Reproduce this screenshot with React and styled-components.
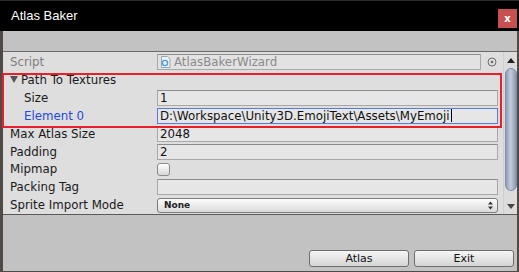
import React from "react";
import styled, { createGlobalStyle } from "styled-components";

const Global = createGlobalStyle`
  html, body { margin: 0; padding: 0; background: #4b4642; }
  * { box-sizing: border-box; }
`;

const Window = styled.div`
  width: 519px;
  height: 272px;
  display: flex;
  flex-direction: column;
  background: #4f4a45;
  font-family: "DejaVu Sans", sans-serif;
  font-size: 11.8px;
  color: #1a1a1a;
`;

const TitleBar = styled.div`
  height: 31px;
  flex: none;
  background: #000;
  border-top: 1px solid #2b2b2b;
  display: flex;
  align-items: center;
  justify-content: space-between;
  padding: 0 2px 0 11px;
`;

const Title = styled.span`
  font-family: "Liberation Sans", Arial, sans-serif;
  font-size: 13px;
  color: #fff;
  margin-top: -2px;
`;

const Close = styled.div`
  width: 19px;
  height: 19px;
  background: #c75050;
  color: #fff;
  font-family: "DejaVu Sans", sans-serif;
  font-weight: bold;
  font-size: 10px;
  display: flex;
  align-items: center;
  justify-content: center;
  margin-top: 4px;
`;

const Client = styled.div`
  flex: 1;
  margin: 0 2px 1px 3px;
  background: #c2c2c2;
  display: flex;
  flex-direction: column;
  padding-top: 20px;
`;

const Inspector = styled.div`
  height: 164px;
  display: flex;
  border-top: 1px solid #6a6a6a;
  border-bottom: 1px solid #5a5a5a;
  background: #dedede;
`;

const Rows = styled.div`
  flex: 1;
  display: flex;
  flex-direction: column;
  padding-top: 1px;
`;

const Group = styled.div`
  position: relative;
  &::after {
    content: "";
    position: absolute;
    top: 2px;
    bottom: -3px;
    left: -1px;
    right: 1px;
    border: 2px solid #e8202a;
    pointer-events: none;
  }
`;

const Row = styled.div`
  height: 18px;
  display: flex;
  align-items: center;
  padding: 0 5px 0 7px;
`;

const Label = styled.div`
  width: 147px;
  flex: none;
  padding-left: ${(p) => (p.$indent ? 14 : 0)}px;
  color: ${(p) => p.$color || "#1a1a1a"};
  display: flex;
  align-items: center;
  white-space: nowrap;
`;

const Fold = styled.span`
  width: 0;
  height: 0;
  border-left: 4px solid transparent;
  border-right: 4px solid transparent;
  border-top: 7px solid #555;
  margin-right: 3px;
`;

const Field = styled.div`
  flex: 1;
  height: 16px;
  background: ${(p) => (p.$disabled ? "#e2e2e2" : "#e6e6e6")};
  border: 1px solid ${(p) => (p.$focus ? "#5a78e0" : "#a8a8a8")};
  border-top-color: ${(p) => (p.$focus ? "#5a78e0" : "#8c8c8c")};
  color: ${(p) => (p.$disabled ? "#8a8a8a" : "#111")};
  padding-left: 2px;
  display: flex;
  align-items: center;
  white-space: nowrap;
  overflow: hidden;
`;

const Caret = styled.span`
  display: inline-block;
  width: 1px;
  height: 13px;
  background: #000;
  margin-left: 1px;
`;

const Picker = styled.div`
  width: 22px;
  flex: none;
  display: flex;
  justify-content: center;
  margin-right: -5px;
`;

const Check = styled.div`
  width: 13px;
  height: 13px;
  border: 1px solid #8a8a8a;
  border-radius: 3px;
  background: linear-gradient(#ffffff, #d6d6d6);
`;

const Popup = styled.div`
  flex: 1;
  height: 15px;
  border: 1px solid #7c7c7c;
  border-radius: 3px;
  background: linear-gradient(#fdfdfd, #dadada);
  display: flex;
  align-items: center;
  justify-content: space-between;
  padding: 0 4px 0 6px;
  font-size: 9px;
  font-weight: 600;
  color: #222;
`;

const Scrollbar = styled.div`
  width: 14px;
  flex: none;
  display: flex;
  flex-direction: column;
  align-items: center;
  background: #dcdcdc;
  border-left: 1px solid #cfcfcf;
`;

const Arrow = styled.div`
  height: 16px;
  display: flex;
  align-items: center;
  justify-content: center;
`;

const Thumb = styled.div`
  flex: 1;
  width: 12px;
  margin: 0 0 7px;
  border-radius: 6px;
  border: 1px solid #7f8ea8;
  background: linear-gradient(90deg, #8f9db5, #c3cbdb 45%, #aab5c8 70%, #8594ad);
`;

const Footer = styled.div`
  flex: 1;
  display: flex;
  justify-content: flex-end;
  align-items: flex-end;
  gap: 5px;
  padding: 0 3px 4px 0;
`;

const Button = styled.div`
  width: 100px;
  height: 17px;
  border: 1px solid #6e6e6e;
  border-radius: 3px;
  background: linear-gradient(#f6f6f6, #d4d4d4);
  display: flex;
  align-items: center;
  justify-content: center;
  font-size: 11px;
  color: #111;
`;

const ScriptIcon = () => (
  <svg width="11" height="12" viewBox="0 0 11 12" style={{ marginRight: 3 }}>
    <path d="M1.5 0.5h6l2.5 2.5v8.5h-8.5z" fill="#eef2f6" stroke="#9aa6b2" />
    <circle cx="5" cy="7" r="2.6" fill="none" stroke="#4aa0d8" strokeWidth="1.4" />
  </svg>
);

export default function App() {
  return (
    <>
      <Global />
      <Window>
        <TitleBar>
          <Title>Atlas Baker</Title>
          <Close>x</Close>
        </TitleBar>
        <Client>
          <Inspector>
            <Rows>
              <Row>
                <Label $color="#7e7e7e">Script</Label>
                <Field $disabled>
                  <ScriptIcon />
                  AtlasBakerWizard
                </Field>
                <Picker>
                  <svg width="10" height="10" viewBox="0 0 10 10">
                    <circle cx="5" cy="5" r="4" fill="none" stroke="#6d6d6d" />
                    <circle cx="5" cy="5" r="1.3" fill="#6d6d6d" />
                  </svg>
                </Picker>
              </Row>
              <Group>
                <Row>
                  <Label>
                    <Fold />
                    Path To Textures
                  </Label>
                </Row>
                <Row>
                  <Label $indent>Size</Label>
                  <Field>1</Field>
                </Row>
                <Row>
                  <Label $indent $color="#2647e0">
                    Element 0
                  </Label>
                  <Field $focus>
                    D:\Workspace\Unity3D.EmojiText\Assets\MyEmoji
                    <Caret />
                  </Field>
                </Row>
              </Group>
              <Row>
                <Label>Max Atlas Size</Label>
                <Field>2048</Field>
              </Row>
              <Row>
                <Label>Padding</Label>
                <Field>2</Field>
              </Row>
              <Row>
                <Label>Mipmap</Label>
                <Check />
              </Row>
              <Row>
                <Label>Packing Tag</Label>
                <Field />
              </Row>
              <Row>
                <Label>Sprite Import Mode</Label>
                <Popup>
                  None
                  <svg width="5" height="9" viewBox="0 0 5 9">
                    <path d="M0 3.5L2.5 0.5L5 3.5z M0 5.5L2.5 8.5L5 5.5z" fill="#333" />
                  </svg>
                </Popup>
              </Row>
            </Rows>
            <Scrollbar>
              <Arrow>
                <svg width="8" height="5" viewBox="0 0 8 5">
                  <path d="M0 5L4 0L8 5z" fill="#222" />
                </svg>
              </Arrow>
              <Thumb />
              <Arrow>
                <svg width="8" height="5" viewBox="0 0 8 5">
                  <path d="M0 0L4 5L8 0z" fill="#444" />
                </svg>
              </Arrow>
            </Scrollbar>
          </Inspector>
          <Footer>
            <Button>Atlas</Button>
            <Button>Exit</Button>
          </Footer>
        </Client>
      </Window>
    </>
  );
}
